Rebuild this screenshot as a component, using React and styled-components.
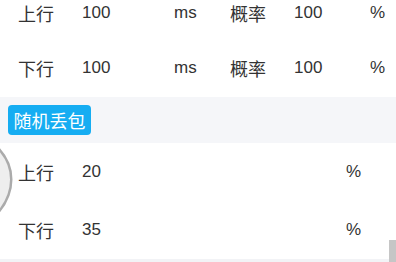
import React from "react";
import styled, { createGlobalStyle } from "styled-components";

const Global = createGlobalStyle`
  html, body { margin: 0; padding: 0; background: #ffffff; overflow: hidden; }
  body { font-family: "Liberation Sans", "Noto Sans CJK SC", sans-serif; color: #333333; }
`;

const Page = styled.div`
  position: relative;
  width: 396px;
  height: 262px;
  overflow: hidden;
  background: #ffffff;
`;

const Stack = styled.div`
  display: flex;
  flex-direction: column;
`;

const Row = styled.div`
  height: ${(p) => (p.$first ? 39 : 58)}px;
  display: flex;
  align-items: ${(p) => (p.$first ? "flex-start" : "center")};
  padding-left: 18px;
  box-sizing: border-box;
  line-height: 26px;
  color: #333333;
  background: #ffffff;
`;

const Cell = styled.span`
  flex: 0 0 ${(p) => p.$w}px;
  white-space: nowrap;
  font-size: ${(p) => (p.$cjk ? 18 : 17)}px;
  font-family: ${(p) =>
    p.$cjk ? '"Noto Sans CJK SC", sans-serif' : '"Liberation Sans", "Noto Sans CJK SC", sans-serif'};
`;

const Band = styled.div`
  height: 46px;
  background: #f5f6f9;
  display: flex;
  align-items: center;
  padding-left: 8px;
`;

const Tag = styled.span`
  display: inline-flex;
  align-items: center;
  justify-content: center;
  height: 30px;
  width: 83px;
  border-radius: 4px;
  background: #16adf2;
  color: #ffffff;
  font-family: "Noto Sans CJK SC", sans-serif;
  font-size: 18px;
  line-height: 30px;
`;

const BottomBar = styled.div`
  height: 8px;
  background: #f2f3f6;
`;

const EdgeArc = styled.svg`
  position: absolute;
  left: 0;
  top: 140px;
`;

const ScrollThumb = styled.div`
  position: absolute;
  right: 0;
  top: 240px;
  width: 7px;
  height: 22px;
  background: #c6c6c6;
`;

const delayRows = [
  { label: "上行", value: "100", rate: "100" },
  { label: "下行", value: "100", rate: "100" },
];

const lossRows = [
  { label: "上行", value: "20" },
  { label: "下行", value: "35" },
];

export default function App() {
  return (
    <Page>
      <Global />
      <Stack>
        {delayRows.map((r, i) => (
          <Row key={"d" + r.label} $first={i === 0}>
            <Cell $w={64} $cjk>{r.label}</Cell>
            <Cell $w={92}>{r.value}</Cell>
            <Cell $w={56}>ms</Cell>
            <Cell $w={64} $cjk>概率</Cell>
            <Cell $w={76}>{r.rate}</Cell>
            <Cell $w={20}>%</Cell>
          </Row>
        ))}
        <Band>
          <Tag>随机丢包</Tag>
        </Band>
        {lossRows.map((r) => (
          <Row key={"l" + r.label}>
            <Cell $w={64} $cjk>{r.label}</Cell>
            <Cell $w={264}>{r.value}</Cell>
            <Cell $w={20}>%</Cell>
          </Row>
        ))}
        <BottomBar />
      </Stack>
      <EdgeArc width="16" height="80" viewBox="0 0 16 80">
        <path d="M -3 7 C 16 26, 16 52, -3 74 Z" fill="#eeeeee" stroke="none" />
        <path d="M -3 7 C 16 26, 16 52, -3 74" fill="none" stroke="#ababab" strokeWidth="2.5" />
      </EdgeArc>
      <ScrollThumb />
    </Page>
  );
}
